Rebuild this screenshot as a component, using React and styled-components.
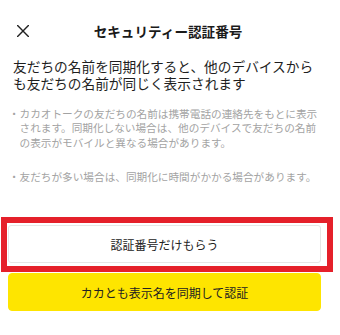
import React from 'react'
import styled, { createGlobalStyle } from 'styled-components'

const GlobalStyle = createGlobalStyle`
    * {
        box-sizing: border-box;
    }

    body {
        margin: 0;
        background: #fff;
        font-family: "Noto Sans CJK JP", "Noto Sans", sans-serif;
        color: #1e1e1e;
    }
`;

const notes = [
    'カカオトークの友だちの名前は携帯電話の連絡先をもとに表示されます。同期化しない場合は、他のデバイスで友だちの名前の表示がモバイルと異なる場合があります。',
    '友だちが多い場合は、同期化に時間がかかる場合があります。',
]

const App = () => {
    return (
        <Page>
            <GlobalStyle />
            <Header>
                <CloseButton aria-label="close">
                    <svg width="12" height="12" viewBox="0 0 12 12">
                        <path d="M0.6 0.6 L11.4 11.4 M11.4 0.6 L0.6 11.4" stroke="#222" strokeWidth="1.4" strokeLinecap="round" />
                    </svg>
                </CloseButton>
                <Title>セキュリティー認証番号</Title>
                <span />
            </Header>

            <Lead>友だちの名前を同期化すると、他のデバイスからも友だちの名前が同じく表示されます</Lead>

            <NoteList>
                {notes.map((n, i) => (
                    <Note key={i}>{n}</Note>
                ))}
            </NoteList>

            <Highlight>
                <Button>認証番号だけもらう</Button>
            </Highlight>
            <Button $primary>カカとも表示名を同期して認証</Button>
        </Page>
    )
}

export default App

// page
const Page = styled.div`
    width: 340px;
    display: flex;
    flex-direction: column;
`;

// header
const Header = styled.header`
    display: grid;
    grid-template-columns: 12px 1fr 12px;
    align-items: center;
    height: 56px;
    padding: 6px 21px 0 17px;
`;

const CloseButton = styled.button`
    display: flex;
    width: 12px;
    height: 12px;
    padding: 0;
    border: none;
    background: none;
`;

const Title = styled.h1`
    margin: 0;
    text-align: center;
    font-size: 13.6px;
    font-weight: 700;
    color: #1a1a1a;
    line-height: 18px;
`;

// lead text
const Lead = styled.p`
    width: 318px;
    margin: 2px 0 0;
    padding-left: 13px;
    font-size: 13.7px;
    line-height: 16.5px;
    color: #1e1e1e;
`;

// notes
const NoteList = styled.ul`
    list-style: none;
    width: 322px;
    margin: 15.6px 0 0;
    padding: 0 0 0 19.5px;
    display: flex;
    flex-direction: column;
    gap: 19px;
`;

const Note = styled.li`
    font-size: 10.65px;
    line-height: 14.7px;
    color: #a3a3a3;
    text-indent: -1em;

    &::before {
        content: '・';
    }
`;

// red frame round the first button
const Highlight = styled.div`
    width: 332px;
    margin: 32.7px 0 0 1px;
    padding: 2px 6px 3px 1px;
    border: 6px solid #e5202a;
`;

const Button = styled.button`
    display: flex;
    align-items: center;
    justify-content: center;
    width: 313px;
    height: 38px;
    margin: ${p => (p.$primary ? '1px 0 0 8px' : '0')};
    padding: 0;
    border: 1px solid ${p => (p.$primary ? '#fee500' : '#e6e6e6')};
    border-radius: ${p => (p.$primary ? '4px' : '3px')};
    background: ${p => (p.$primary ? '#fee500' : '#fff')};
    font-family: inherit;
    font-size: 12px;
    color: #222;
`;
